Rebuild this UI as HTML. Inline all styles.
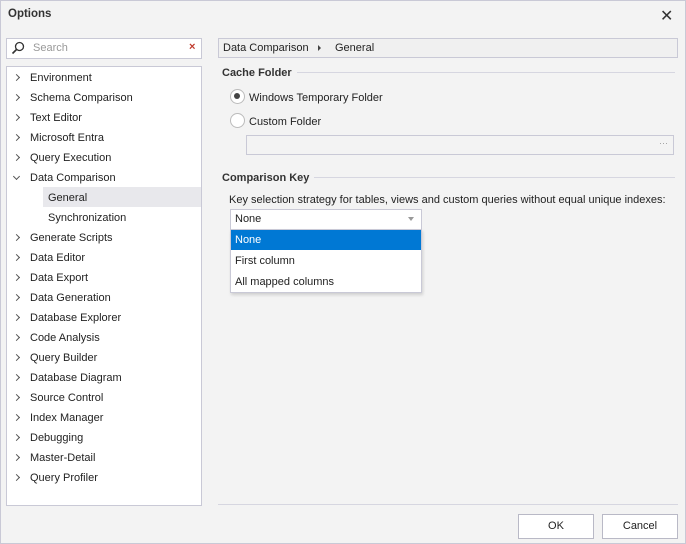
<!DOCTYPE html><html><head><style>
body{margin:0;width:686px;height:544px;background:#f3f3f3;font-family:"Liberation Sans",sans-serif;font-size:11px;color:#222;position:relative;overflow:hidden}
.a{position:absolute}
.win{position:absolute;left:0;top:0;width:684px;height:542px;border:1px solid #c9c9d6}
.t{position:absolute;left:30px;height:20px;line-height:20px;white-space:nowrap}
.ch{position:absolute;left:14px;width:4px;height:4px;border-right:1.3px solid #555;border-bottom:1.3px solid #555;transform:rotate(-45deg)}
.btn{position:absolute;top:514px;width:74px;height:23px;border:1px solid #b9b9c6;background:#fff;text-align:center;line-height:23px}
.hr{position:absolute;height:1px;background:#d6d6e0}
</style></head><body>
<div class="win"></div>
<div class="a" style="left:8px;top:8px;font-weight:bold;font-size:11.5px;color:#333">Options</div>
<div class="a" style="left:660px;top:6px;font-size:16px;color:#333">✕</div>
<div class="a" style="left:6px;top:38px;width:194px;height:19px;background:#fff;border:1px solid #c9c9d6"></div>
<svg class="a" style="left:10px;top:40px" width="16" height="16"><circle cx="9.5" cy="6.5" r="4" fill="none" stroke="#333" stroke-width="1.3"/><path d="M6.5 9.5L2.5 13.5" stroke="#333" stroke-width="1.6"/></svg>
<div class="a" style="left:33px;top:42px;color:#999">Search</div>
<div class="a" style="left:189px;top:41px;color:#c0392b;font-size:11px;font-weight:bold">×</div>
<div class="a" style="left:6px;top:66px;width:194px;height:438px;background:#fff;border:1px solid #c9c9d6"></div>
<div class="a" style="left:43px;top:187px;width:158px;height:20px;background:#e8e8ec"></div>
<div id="tree"></div>
<div class="a" style="left:218px;top:38px;width:458px;height:18px;border:1px solid #c9c9d6;background:#f0f0f0"></div>
<div class="a" style="left:223px;top:42px">Data Comparison</div>
<div class="a" style="left:318px;top:45px;width:0;height:0;border-left:3px solid #444;border-top:3px solid transparent;border-bottom:3px solid transparent"></div>
<div class="a" style="left:335px;top:42px">General</div>
<div class="a" style="left:222px;top:67px;font-weight:bold;color:#333">Cache Folder</div>
<div class="hr" style="left:297px;top:72px;width:378px"></div>
<div class="a" style="left:230px;top:89px;width:13px;height:13px;border-radius:50%;background:#fff;border:1px solid #bbb"></div>
<div class="a" style="left:234px;top:93px;width:6px;height:6px;border-radius:50%;background:#444"></div>
<div class="a" style="left:249px;top:92px">Windows Temporary Folder</div>
<div class="a" style="left:230px;top:113px;width:13px;height:13px;border-radius:50%;background:#fff;border:1px solid #bbb"></div>
<div class="a" style="left:249px;top:116px">Custom Folder</div>
<div class="a" style="left:246px;top:135px;width:426px;height:18px;border:1px solid #c9c9d6;background:#f3f3f3"></div>
<div class="a" style="left:659px;top:138px;color:#999;font-size:9px">···</div>
<div class="a" style="left:222px;top:172px;font-weight:bold;color:#333">Comparison Key</div>
<div class="hr" style="left:314px;top:177px;width:361px"></div>
<div class="a" style="left:229px;top:194px;white-space:nowrap">Key selection strategy for tables, views and custom queries without equal unique indexes:</div>
<div class="a" style="left:230px;top:209px;width:190px;height:19px;border:1px solid #c9c9d6;background:#fff"></div>
<div class="a" style="left:235px;top:213px">None</div>
<div class="a" style="left:408px;top:217px;border-top:4px solid #999;border-left:3px solid transparent;border-right:3px solid transparent"></div>
<div class="a" style="left:230px;top:229px;width:190px;height:62px;border:1px solid #c9c9d6;background:#fff;box-shadow:1px 2px 3px rgba(0,0,0,.15)"></div>
<div class="a" style="left:231px;top:230px;width:190px;height:20px;background:#0078d4"></div>
<div class="a" style="left:235px;top:234px;color:#fff">None</div>
<div class="a" style="left:235px;top:255px">First column</div>
<div class="a" style="left:235px;top:276px">All mapped columns</div>
<div class="hr" style="left:218px;top:504px;width:460px"></div>
<div class="btn" style="left:518px">OK</div>
<div class="btn" style="left:602px">Cancel</div>
<script>
var items=["Environment","Schema Comparison","Text Editor","Microsoft Entra","Query Execution","Data Comparison","General","Synchronization","Generate Scripts","Data Editor","Data Export","Data Generation","Database Explorer","Code Analysis","Query Builder","Database Diagram","Source Control","Index Manager","Debugging","Master-Detail","Query Profiler"];
var h="";items.forEach(function(s,i){var y=68+i*20;var sub=(i==6||i==7);h+='<div class="t" style="top:'+y+'px;left:'+(sub?48:30)+'px">'+s+'</div>';
if(!sub){h+='<div class="ch" style="top:'+(y+7)+'px;'+(i==5?'transform:rotate(45deg);top:'+(y+6)+'px':'')+'"></div>';}});
document.getElementById("tree").innerHTML=h;
</script>
</body></html>
